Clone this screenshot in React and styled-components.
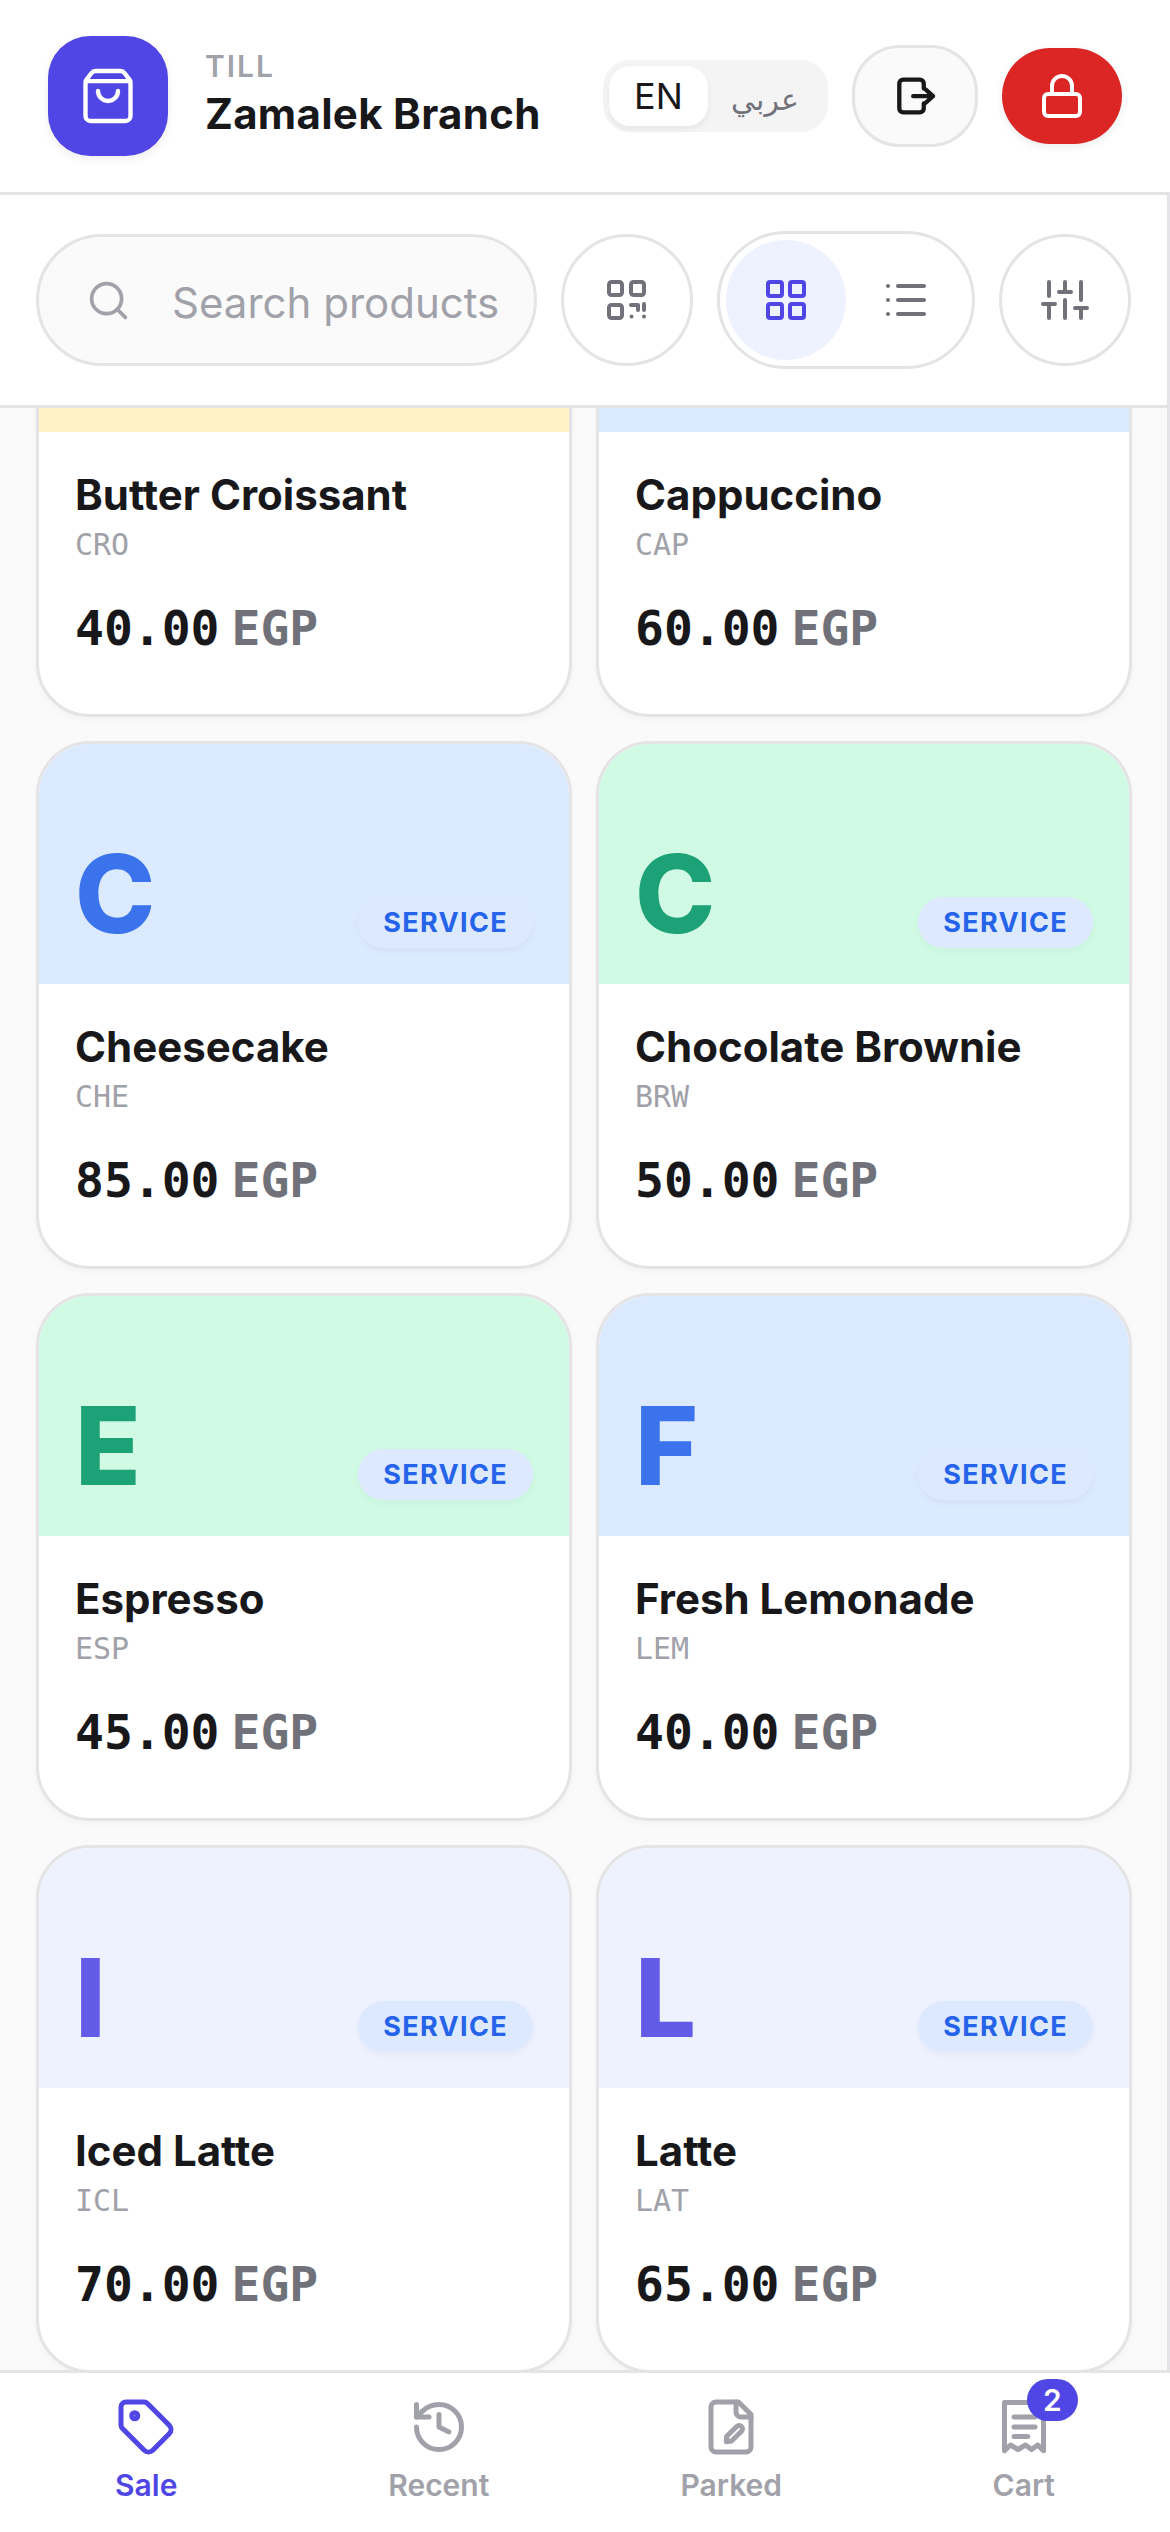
import React, { useLayoutEffect, useRef } from "react";
import styled, { createGlobalStyle } from "styled-components";
import { ShoppingBag, Lock, Search, LayoutGrid, List, History } from "lucide-react";

const GlobalStyle = createGlobalStyle`
  html, body {
    margin: 0;
    padding: 0;
    background: #ffffff;
    font-family: 'Inter', 'Liberation Sans', sans-serif;
  }
  * {
    box-sizing: border-box;
  }
`;

const Page = styled.div`
  width: 1170px;
  height: 2532px;
  display: flex;
  flex-direction: column;
  overflow: hidden;
  background: #ffffff;
`;

const Header = styled.header`
  height: 195px;
  flex: none;
  display: flex;
  align-items: center;
  justify-content: space-between;
  padding: 0 48px;
  background: #ffffff;
  border-bottom: 3px solid #e4e4e7;
`;

const Brand = styled.div`
  display: flex;
  align-items: center;
  gap: 37px;
`;

const Logo = styled.div`
  width: 120px;
  height: 120px;
  border-radius: 42px;
  background: #4f46e5;
  color: #ffffff;
  display: flex;
  align-items: center;
  justify-content: center;
  box-shadow: 0 3px 9px rgba(0, 0, 0, 0.08);
`;

const BrandText = styled.div`
  display: flex;
  flex-direction: column;
  padding-bottom: 3px;
`;

const TillLabel = styled.div`
  margin-bottom: 3px;
  font-size: 30px;
  line-height: 36px;
  font-weight: 600;
  letter-spacing: 2px;
  color: #a1a1aa;
`;

const BranchName = styled.div`
  font-size: 42px;
  line-height: 54px;
  font-weight: 700;
  letter-spacing: 0.3px;
  color: #18181b;
`;

const HeaderActions = styled.div`
  display: flex;
  align-items: center;
  gap: 24px;
`;

const LangSwitch = styled.div`
  width: 225px;
  height: 72px;
  padding: 6px;
  display: flex;
  border-radius: 27px;
  background: #f4f4f5;
`;

const LangOption = styled.div`
  flex: ${({ $active }) => ($active ? "0 0 99px" : "1")};
  display: flex;
  align-items: center;
  justify-content: center;
  padding-top: ${({ $active }) => ($active ? "0" : "6px")};
  border-radius: 21px;
  font-family: ${({ $active }) =>
    $active ? "'Inter', sans-serif" : "'DejaVu Sans', sans-serif"};
  font-size: ${({ $active }) => ($active ? "36px" : "30px")};
  color: ${({ $active }) => ($active ? "#18181b" : "#71717a")};
  background: ${({ $active }) => ($active ? "#ffffff" : "transparent")};
  box-shadow: ${({ $active }) =>
    $active ? "0 3px 6px rgba(0, 0, 0, 0.06)" : "none"};
`;

const ExitButton = styled.button`
  width: 126px;
  height: 102px;
  padding: 0;
  display: flex;
  align-items: center;
  justify-content: center;
  border: 3px solid #e4e4e7;
  border-radius: 48px;
  background: #fafafa;
  color: #18181b;
`;

const LockButton = styled.button`
  width: 120px;
  height: 96px;
  padding: 0;
  display: flex;
  align-items: center;
  justify-content: center;
  border: none;
  border-radius: 48px;
  background: #dc2626;
  color: #ffffff;
  box-shadow: 0 3px 9px rgba(0, 0, 0, 0.08);
`;

const Main = styled.main`
  flex: 1;
  min-height: 0;
  display: flex;
  flex-direction: column;
  border-right: 3px solid #e4e4e7;
  background: #fafafa;
`;

const Toolbar = styled.div`
  height: 213px;
  flex: none;
  display: flex;
  align-items: center;
  gap: 24px;
  padding: 0 36px;
  background: #ffffff;
  border-bottom: 3px solid #e4e4e7;
`;

const SearchBox = styled.div`
  flex: 1;
  min-width: 0;
  height: 132px;
  display: flex;
  align-items: center;
  gap: 41px;
  padding: 0 0 0 47px;
  border: 3px solid #e4e4e7;
  border-radius: 66px;
  background: #fafafa;
  color: #a1a1aa;
`;

const SearchInput = styled.input`
  flex: 1;
  min-width: 0;
  border: none;
  outline: none;
  padding: 4px 0 0;
  background: transparent;
  font-family: 'Inter', sans-serif;
  font-size: 42px;
  color: #18181b;
  &::placeholder {
    color: #a1a1aa;
    opacity: 1;
  }
`;

const RoundButton = styled.button`
  flex: none;
  width: 132px;
  height: 132px;
  padding: 0;
  display: flex;
  align-items: center;
  justify-content: center;
  border: 3px solid #e4e4e7;
  border-radius: 50%;
  background: #ffffff;
  color: #71717a;
`;

const ViewSwitch = styled.div`
  flex: none;
  height: 138px;
  display: flex;
  padding: 6px;
  border: 3px solid #e4e4e7;
  border-radius: 69px;
  background: #ffffff;
`;

const ViewOption = styled.div`
  width: 120px;
  height: 120px;
  display: flex;
  align-items: center;
  justify-content: center;
  border-radius: 50%;
  background: ${({ $active }) => ($active ? "#eef2ff" : "transparent")};
  color: ${({ $active }) => ($active ? "#4f46e5" : "#71717a")};
`;

const Products = styled.div`
  flex: 1;
  min-height: 0;
  overflow: hidden;
  padding: 36px 35px 36px 36px;
`;

const ProductGrid = styled.div`
  display: grid;
  grid-template-columns: 1fr 1fr;
  gap: 24px;
`;

const Card = styled.article`
  height: 528px;
  display: flex;
  flex-direction: column;
  overflow: hidden;
  border: 3px solid #e4e4e7;
  border-radius: 54px;
  background: #ffffff;
  box-shadow: 0 3px 6px rgba(0, 0, 0, 0.03);
`;

const Tile = styled.div`
  position: relative;
  flex: 0 0 240px;
  display: flex;
  align-items: flex-end;
  padding: 0 36px 36px;
  background: ${({ $bg }) => $bg};
`;

const TileLetter = styled.span`
  font-size: 108px;
  line-height: 108px;
  font-weight: 800;
  color: ${({ $color }) => $color};
  opacity: 0.88;
`;

const TypeBadge = styled.span`
  position: absolute;
  right: 36px;
  bottom: 36px;
  height: 51px;
  padding: 0 25px;
  display: flex;
  align-items: center;
  border-radius: 26px;
  background: #dde9fe;
  font-size: 27px;
  font-weight: 700;
  letter-spacing: 1.35px;
  color: #2563eb;
  box-shadow: 0 3px 6px rgba(0, 0, 0, 0.04);
`;

const CardBody = styled.div`
  flex: 1;
  display: flex;
  flex-direction: column;
  padding: 37px 36px 0;
`;

const ProductName = styled.div`
  font-size: 42px;
  line-height: 52px;
  font-weight: 700;
  color: #18181b;
`;

const Sku = styled.div`
  margin-top: 6px;
  font-family: 'DejaVu Sans Mono', monospace;
  font-size: 30px;
  line-height: 36px;
  color: #a1a1aa;
`;

const Price = styled.div`
  margin-top: 35px;
  display: flex;
  gap: 12px;
  font-family: 'DejaVu Sans Mono', monospace;
  font-size: 48px;
  line-height: 60px;
  font-weight: 700;
  color: #18181b;
`;

const Currency = styled.span`
  color: #71717a;
`;

const BottomNav = styled.nav`
  height: 162px;
  flex: none;
  display: grid;
  grid-template-columns: repeat(4, 1fr);
  padding-top: 24px;
  background: #ffffff;
  border-top: 3px solid #e4e4e7;
`;

const NavItem = styled.div`
  display: flex;
  flex-direction: column;
  align-items: center;
  gap: 8px;
  color: ${({ $active }) => ($active ? "#4f46e5" : "#a1a1aa")};
`;

const NavIcon = styled.div`
  position: relative;
  width: 60px;
  height: 60px;
`;

const NavLabel = styled.span`
  font-size: 30px;
  line-height: 40px;
  font-weight: 600;
`;

const CartCount = styled.span`
  position: absolute;
  top: -18px;
  left: 33px;
  width: 51px;
  height: 42px;
  display: flex;
  align-items: center;
  justify-content: center;
  border-radius: 21px;
  background: #4f46e5;
  color: #ffffff;
  font-size: 30px;
  font-weight: 600;
`;

const ExitIcon = () => (
  <svg width="43" height="42" viewBox="190 105 130 125" fill="none" stroke="currentColor" strokeWidth="13" strokeLinecap="round" strokeLinejoin="round">
    <path d="M280 145v-15a12 12 0 0 0-12-12h-50a12 12 0 0 0-12 12v75a12 12 0 0 0 12 12h50a12 12 0 0 0 12-12v-15" />
    <path d="M248 168h60M286 148l22 20-22 20" />
  </svg>
);

const QrIcon = () => (
  <svg width="48" height="48" viewBox="0 0 48 48" fill="none" stroke="currentColor" strokeWidth="4" strokeLinecap="round" strokeLinejoin="round">
    <rect x="6" y="6" width="13" height="13" rx="2.5" />
    <rect x="28" y="6" width="13" height="13" rx="2.5" />
    <rect x="6" y="29" width="13" height="13" rx="2.5" />
    <path d="M28 29h7v5M41 28v6M28.5 40.5h.01M41 40.5h.01" />
  </svg>
);

const SlidersIcon = () => (
  <svg width="48" height="48" viewBox="0 0 24 24" fill="none" stroke="currentColor" strokeWidth="2" strokeLinecap="round" strokeLinejoin="round">
    <path d="M4 21v-7M4 10V3M12 21v-9M12 8V3M20 21v-5M20 12V3M1 14h6M9 8h6M17 16h6" />
  </svg>
);

const TagIcon = () => (
  <svg width="60" height="60" viewBox="0 0 24 24" fill="none" stroke="currentColor" strokeWidth="2" strokeLinecap="round" strokeLinejoin="round">
    <path d="M12.586 2.586A2 2 0 0 0 11.172 2H4a2 2 0 0 0-2 2v7.172a2 2 0 0 0 .586 1.414l8.704 8.704a2.426 2.426 0 0 0 3.42 0l6.58-6.58a2.426 2.426 0 0 0 0-3.42z" />
    <circle cx="7.5" cy="7.5" r="1.2" />
  </svg>
);

const ParkedIcon = () => (
  <svg width="60" height="60" viewBox="0 0 24 24" fill="none" stroke="currentColor" strokeWidth="2" strokeLinecap="round" strokeLinejoin="round">
    <path d="M15 2H6a2 2 0 0 0-2 2v16a2 2 0 0 0 2 2h12a2 2 0 0 0 2-2V7z" />
    <path d="M14 2v4a2 2 0 0 0 2 2h4" />
    <path d="M10.3 15.7l4-3.9a1.3 1.3 0 0 1 1.9 1.9l-4 3.9-2.1.3z" />
  </svg>
);

const ReceiptIcon = () => (
  <svg width="60" height="60" viewBox="0 0 24 24" fill="none" stroke="currentColor" strokeWidth="2" strokeLinecap="round" strokeLinejoin="round">
    <path d="M4.2 21.5V2.2H19.8V21.5L17.5 19.2L15 21L12.6 19.2L9.6 21L6.6 19.2Z" />
    <path d="M8 8h8.4M8 12h8.4M8 15.8h5.5" />
  </svg>
);

const tints = {
  amber: { bg: "#fef3c7", text: "#d97706" },
  blue: { bg: "#dbeafe", text: "#2563eb" },
  green: { bg: "#d1fae5", text: "#059669" },
  indigo: { bg: "#eef2ff", text: "#4f46e5" },
};

const products = [
  { name: "Butter Croissant", sku: "CRO", price: "40.00", tint: "amber" },
  { name: "Cappuccino", sku: "CAP", price: "60.00", tint: "blue" },
  { name: "Cheesecake", sku: "CHE", price: "85.00", tint: "blue" },
  { name: "Chocolate Brownie", sku: "BRW", price: "50.00", tint: "green" },
  { name: "Espresso", sku: "ESP", price: "45.00", tint: "green" },
  { name: "Fresh Lemonade", sku: "LEM", price: "40.00", tint: "blue" },
  { name: "Iced Latte", sku: "ICL", price: "70.00", tint: "indigo" },
  { name: "Latte", sku: "LAT", price: "65.00", tint: "indigo" },
];

const App = () => {
  const productsRef = useRef(null);

  // the list is shown scrolled down past the top of the first row
  useLayoutEffect(() => {
    productsRef.current.scrollTop = 255;
  }, []);

  return (
    <Page>
      <GlobalStyle />
      <Header>
        <Brand>
          <Logo>
            <ShoppingBag size={60} strokeWidth={1.75} />
          </Logo>
          <BrandText>
            <TillLabel>TILL</TillLabel>
            <BranchName>Zamalek Branch</BranchName>
          </BrandText>
        </Brand>
        <HeaderActions>
          <LangSwitch>
            <LangOption $active>EN</LangOption>
            <LangOption>عربي</LangOption>
          </LangSwitch>
          <ExitButton>
            <ExitIcon />
          </ExitButton>
          <LockButton>
            <Lock size={48} strokeWidth={2} />
          </LockButton>
        </HeaderActions>
      </Header>

      <Main>
        <Toolbar>
          <SearchBox>
            <Search size={45} strokeWidth={2} />
            <SearchInput placeholder="Search products" />
          </SearchBox>
          <RoundButton>
            <QrIcon />
          </RoundButton>
          <ViewSwitch>
            <ViewOption $active>
              <LayoutGrid size={48} strokeWidth={2} />
            </ViewOption>
            <ViewOption>
              <List size={48} strokeWidth={2} />
            </ViewOption>
          </ViewSwitch>
          <RoundButton>
            <SlidersIcon />
          </RoundButton>
        </Toolbar>

        <Products ref={productsRef}>
          <ProductGrid>
            {products.map((product) => (
              <Card key={product.sku}>
                <Tile $bg={tints[product.tint].bg}>
                  <TileLetter $color={tints[product.tint].text}>{product.name[0]}</TileLetter>
                  <TypeBadge>SERVICE</TypeBadge>
                </Tile>
                <CardBody>
                  <ProductName>{product.name}</ProductName>
                  <Sku>{product.sku}</Sku>
                  <Price>
                    {product.price}
                    <Currency>EGP</Currency>
                  </Price>
                </CardBody>
              </Card>
            ))}
          </ProductGrid>
        </Products>
      </Main>

      <BottomNav>
        <NavItem $active>
          <NavIcon>
            <TagIcon />
          </NavIcon>
          <NavLabel>Sale</NavLabel>
        </NavItem>
        <NavItem>
          <NavIcon>
            <History size={60} strokeWidth={2} />
          </NavIcon>
          <NavLabel>Recent</NavLabel>
        </NavItem>
        <NavItem>
          <NavIcon>
            <ParkedIcon />
          </NavIcon>
          <NavLabel>Parked</NavLabel>
        </NavItem>
        <NavItem>
          <NavIcon>
            <ReceiptIcon />
            <CartCount>2</CartCount>
          </NavIcon>
          <NavLabel>Cart</NavLabel>
        </NavItem>
      </BottomNav>
    </Page>
  );
};

export default App;
